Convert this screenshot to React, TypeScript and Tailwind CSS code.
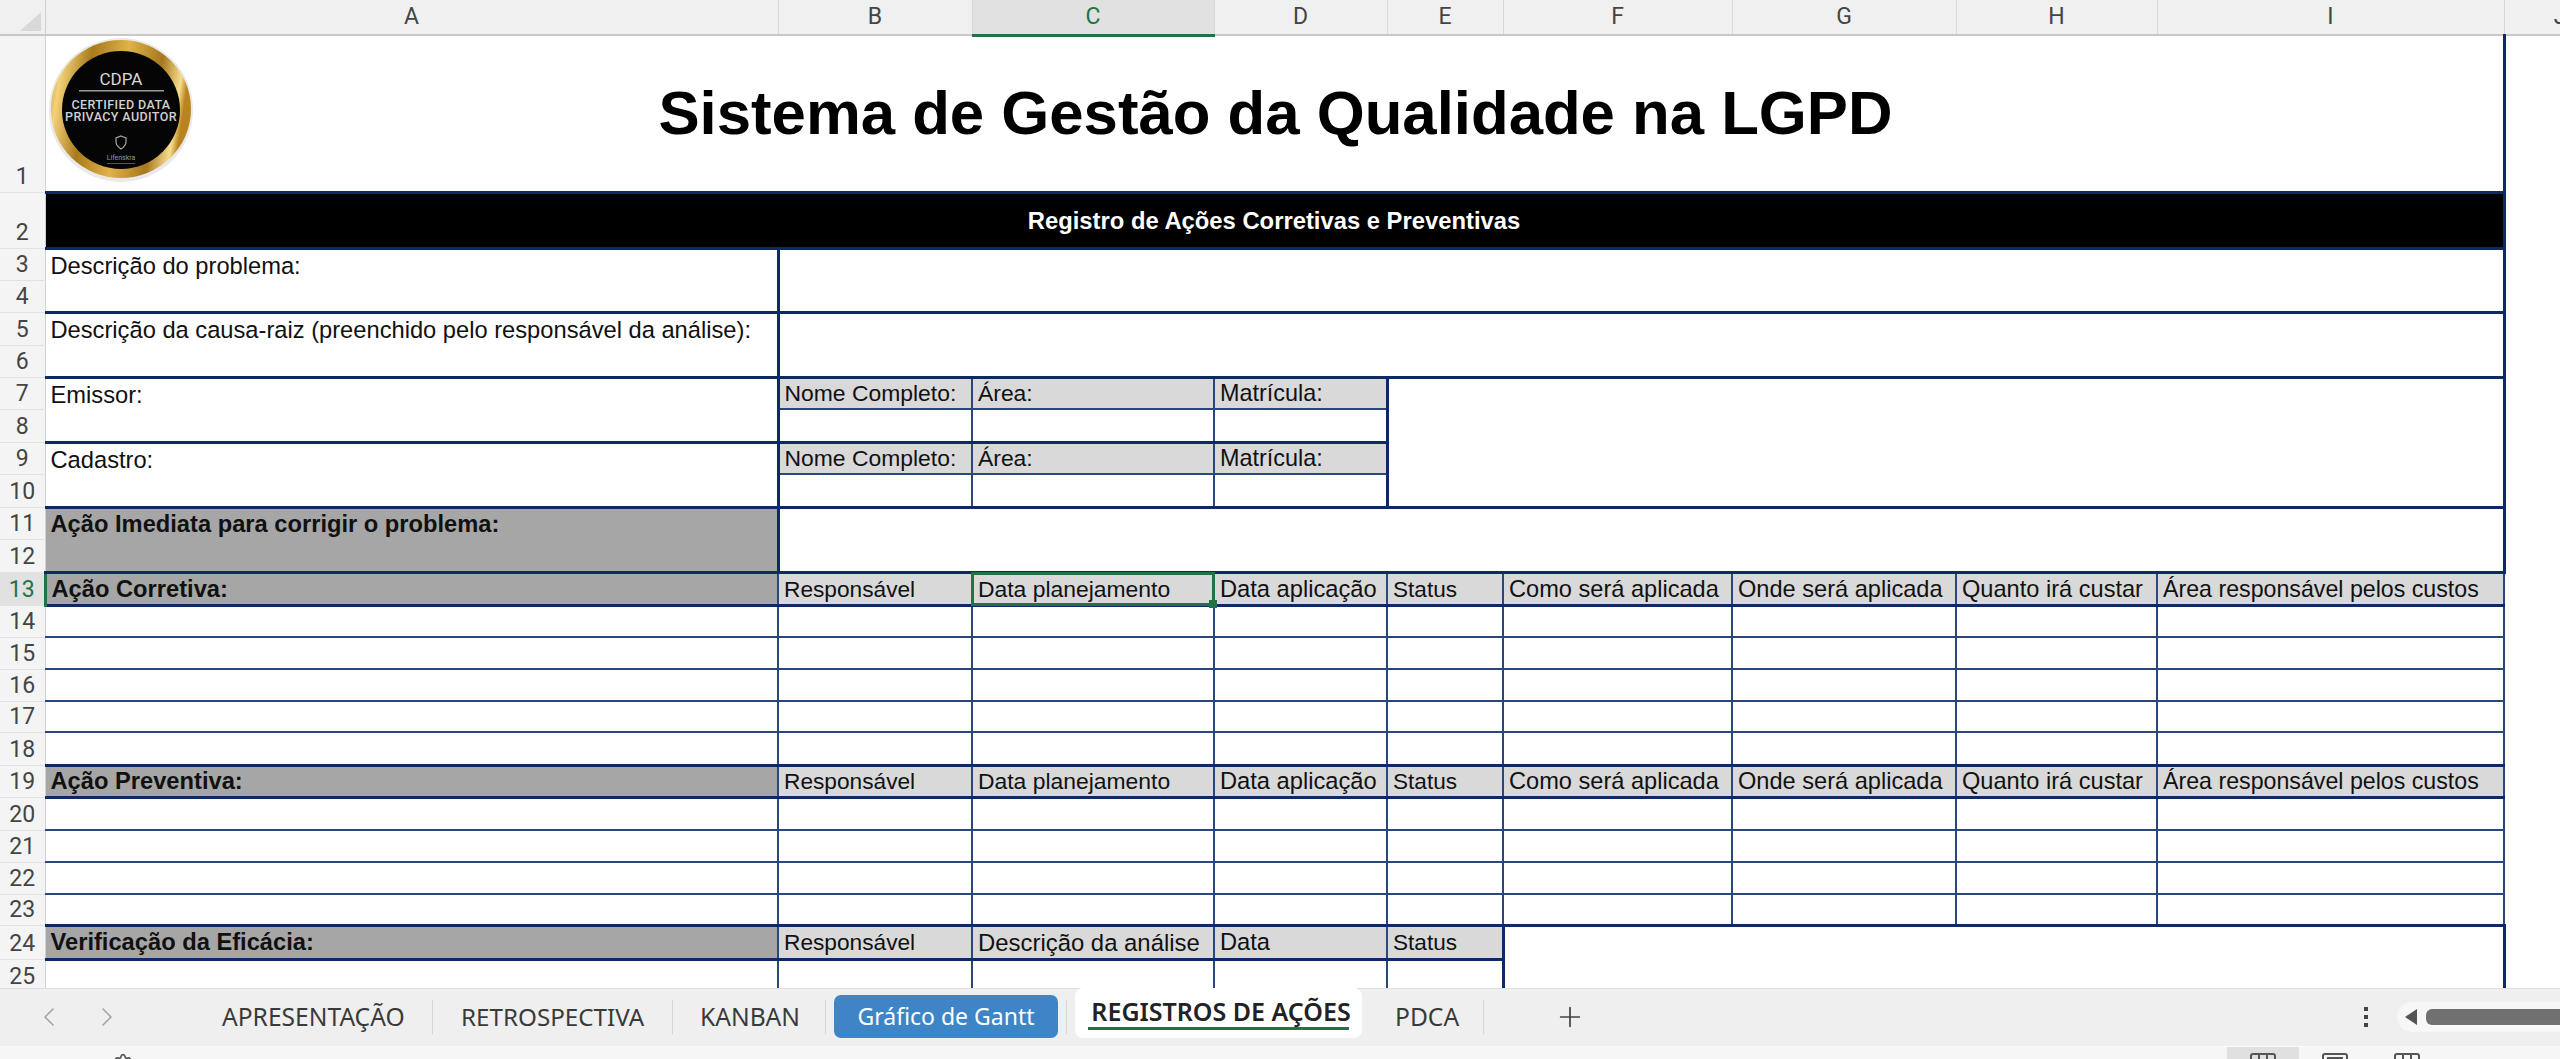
import { ChevronLeft, ChevronRight, Plus, Settings } from 'lucide-react';
import type { ReactNode } from 'react';

const thin = 'border-2 border-[#2a4779]';
const thick = 'border-[3px] border-[#0c2a63]';
const headRow = 'border-x-2 border-y-[3px] border-x-[#2a4779] border-y-[#0c2a63]';
const labelTop = 'border-t-[3px] border-t-[#0c2a63] bg-[#d9d9d9]';
const fieldBottom = 'border-b-[3px] border-b-[#0c2a63]';

const colLabels = ['A', 'B', 'C', 'D', 'E', 'F', 'G', 'H', 'I', 'J'];
const actionHeaders = [
  { t: 'Responsável', size: 'text-[22.7px]' },
  { t: 'Data planejamento', size: 'text-[22.9px]' },
  { t: 'Data aplicação', size: 'text-[23.7px]' },
  { t: 'Status', size: 'text-[22.6px]' },
  { t: 'Como será aplicada', size: 'text-[23.6px]' },
  { t: 'Onde será aplicada', size: 'text-[23.6px]' },
  { t: 'Quanto irá custar', size: 'text-[23.6px]' },
  { t: 'Área responsável pelos custos', size: 'text-[23.2px]' },
];

function Cell({
  children,
  className = '',
  size = 'text-[23.7px]',
  colSpan,
  rowSpan,
}: {
  children?: ReactNode;
  className?: string;
  size?: string;
  colSpan?: number;
  rowSpan?: number;
}) {
  return (
    <td
      colSpan={colSpan}
      rowSpan={rowSpan}
      className={`px-[5px] py-0 whitespace-nowrap overflow-hidden leading-[27px] text-[#111] ${size} ${className}`}
    >
      {children}
    </td>
  );
}

function RowNum({ n, className }: { n: number; className: string }) {
  const active = n === 13;
  return (
    <th
      className={`${className} p-0 align-bottom font-normal text-center text-[23px] leading-[30px] border-b border-[#e2e2e2] font-['Roboto',sans-serif] ${
        active
          ? 'bg-[#e1e1e1] text-[#217346] border-r-[3px] border-r-[#217346]'
          : 'bg-[#f4f4f4] text-[#444] border-r border-r-[#d0d0d0]'
      }`}
    >
      {n}
    </th>
  );
}

function BlankRow({ n, h, cols = 9 }: { n: number; h: string; cols?: number }) {
  return (
    <tr>
      <RowNum n={n} className={h} />
      {Array.from({ length: cols }).map((_, i) => (
        <Cell key={i} className={`${thin} ${i === 0 ? 'border-l-0' : ''}`} />
      ))}
    </tr>
  );
}

function ActionHeader({ n, h, label, selected }: { n: number; h: string; label: string; selected?: boolean }) {
  return (
    <tr>
      <RowNum n={n} className={h} />
      <Cell className={`${headRow} border-l-0 bg-[#a6a6a6] font-bold pt-[1px]`}>{label}</Cell>
      {actionHeaders.map((col, i) => (
        <Cell
          key={col.t}
          size={col.size}
          className={`${headRow} pt-[1px] bg-[#d9d9d9] ${selected && i === 1 ? 'relative overflow-visible' : ''}`}
        >
          {col.t}
          {selected && i === 1 && (
            <span className="absolute -inset-[2px] border-[3px] border-[#217346]">
              <span className="absolute -right-[5px] -bottom-[5px] w-[8px] h-[8px] bg-[#217346]" />
            </span>
          )}
        </Cell>
      ))}
    </tr>
  );
}

function Logo() {
  return (
    <svg className="absolute left-[3px] top-[1px]" width="150" height="150" viewBox="0 0 150 150">
      <defs>
        <linearGradient id="gold" x1="0" y1="0" x2="1" y2="0.15">
          <stop offset="0" stopColor="#c08a20" />
          <stop offset="0.1" stopColor="#f3d27a" />
          <stop offset="0.3" stopColor="#a97a1c" />
          <stop offset="0.55" stopColor="#e0b24a" />
          <stop offset="0.8" stopColor="#a6781e" />
          <stop offset="0.95" stopColor="#f7dd8f" />
          <stop offset="1" stopColor="#b98420" />
        </linearGradient>
      </defs>
      <circle cx="72" cy="72" r="72" fill="#e9e9e9" />
      <ellipse cx="72" cy="71" rx="70" ry="69" fill="url(#gold)" />
      <ellipse cx="72" cy="72" rx="59" ry="59" fill="#050505" />
      <g textAnchor="middle" fontFamily="Roboto, sans-serif">
        <text x="72" y="47" fontSize="17" fill="#d8d8d8">CDPA</text>
        <rect x="30" y="52" width="85" height="1.5" fill="#9a9a9a" />
        <text x="72" y="71" fontSize="12.5" fontWeight="500" letterSpacing="0.4" fill="#d0d0d0">CERTIFIED DATA</text>
        <text x="72" y="83" fontSize="12.5" fontWeight="500" letterSpacing="0.4" fill="#d0d0d0">PRIVACY AUDITOR</text>
        <text x="72" y="122" fontSize="7" fill="#9a9a9a">Lifenskra</text>
      </g>
      <path d="M72 98l5 2v4c0 3-2 5-5 7-3-2-5-4-5-7v-4z" fill="none" stroke="#a8a8a8" strokeWidth="1.2" />
      <rect x="58" y="125" width="28" height="1" fill="#555" />
    </svg>
  );
}

function Divider() {
  return <span className="w-px h-[34px] bg-[#d6d6d6]" />;
}

function ViewIcon({ bar }: { bar?: boolean }) {
  return (
    <svg width="26" height="26" viewBox="0 0 26 26" fill="none" stroke="#555" strokeWidth="2">
      <rect x="1" y="1" width="24" height="24" rx="2" />
      {bar ? <path d="M5 5h16" /> : <path d="M9 1v8M17 1v8" />}
    </svg>
  );
}

export default function App() {
  return (
    <div className="w-[2560px] h-[1059px] flex flex-col overflow-hidden bg-white font-['Liberation_Sans',Arial,sans-serif]">
      {/* Sheet */}
      <div className="h-[988px] overflow-hidden">
        <table className="table-fixed border-collapse w-[2616px]">
          <colgroup>
            <col className="w-[45px]" />
            <col className="w-[733px]" />
            <col className="w-[194px]" />
            <col className="w-[242px]" />
            <col className="w-[173px]" />
            <col className="w-[116px]" />
            <col className="w-[229px]" />
            <col className="w-[224px]" />
            <col className="w-[201px]" />
            <col className="w-[347px]" />
            <col className="w-[112px]" />
          </colgroup>
          <tbody>
            <tr className="h-[35px]">
              <th className="h-[35px] p-0 bg-[#f0f0f0] border-b-2 border-b-[#c8c8c8] border-r border-r-[#d0d0d0] align-top">
                <svg width="45" height="34" viewBox="0 0 45 34" className="block">
                  <path d="M41 12v19H20z" fill="#d8d8d8" />
                </svg>
              </th>
              {colLabels.map((c) => (
                <th
                  key={c}
                  className={`h-[35px] p-0 font-normal text-center text-[23px] leading-[30px] border-b-2 border-r border-r-[#d8d8d8] font-['Roboto',sans-serif] ${
                    c === 'C'
                      ? 'bg-[#e1e1e1] text-[#217346] border-b-[3px] border-b-[#217346]'
                      : 'bg-[#f0f0f0] text-[#444] border-b-[#c8c8c8]'
                  }`}
                >
                  {c}
                </th>
              ))}
            </tr>

            <tr>
              <RowNum n={1} className="h-[157px]" />
              <Cell
                colSpan={9}
                className="relative text-center overflow-visible border-r-[3px] border-r-[#0c2a63] border-b-[3px] border-b-[#0c2a63]"
              >
                <Logo />
                <span className="block -mt-[1px] pl-[3px] text-[61.7px] leading-[70px] font-bold text-black">
                  Sistema de Gestão da Qualidade na LGPD
                </span>
              </Cell>
            </tr>

            <tr>
              <RowNum n={2} className="h-[56px]" />
              <Cell colSpan={9} size="text-[23.8px]" className={`${thick} border-l-0 bg-black text-center font-bold text-white`}>
                Registro de Ações Corretivas e Preventivas
              </Cell>
            </tr>

            <tr>
              <RowNum n={3} className="h-[32px]" />
              <Cell rowSpan={2} className={`${thick} border-l-0 align-top pt-[3px]`}>Descrição do problema:</Cell>
              <Cell colSpan={8} rowSpan={2} className={thick} />
            </tr>
            <tr>
              <RowNum n={4} className="h-[32px]" />
            </tr>

            <tr>
              <RowNum n={5} className="h-[33px]" />
              <Cell rowSpan={2} className={`${thick} border-l-0 align-top pt-[3px]`}>
                Descrição da causa-raiz (preenchido pelo responsável da análise):
              </Cell>
              <Cell colSpan={8} rowSpan={2} className={thick} />
            </tr>
            <tr>
              <RowNum n={6} className="h-[32px]" />
            </tr>

            <tr>
              <RowNum n={7} className="h-[32px]" />
              <Cell rowSpan={2} className={`${thick} border-l-0 align-top pt-[3px]`}>Emissor:</Cell>
              <Cell size="text-[22.9px]" className={`${thin} ${labelTop}`}>Nome Completo:</Cell>
              <Cell size="text-[22.9px]" className={`${thin} ${labelTop}`}>Área:</Cell>
              <Cell size="text-[23.4px]" className={`${thin} ${labelTop}`}>Matrícula:</Cell>
              <Cell colSpan={5} rowSpan={4} className={thick} />
            </tr>
            <tr>
              <RowNum n={8} className="h-[33px]" />
              <Cell className={`${thin} ${fieldBottom}`} />
              <Cell className={`${thin} ${fieldBottom}`} />
              <Cell className={`${thin} ${fieldBottom}`} />
            </tr>
            <tr>
              <RowNum n={9} className="h-[32px]" />
              <Cell rowSpan={2} className={`${thick} border-l-0 align-top pt-[3px]`}>Cadastro:</Cell>
              <Cell size="text-[22.9px]" className={`${thin} ${labelTop}`}>Nome Completo:</Cell>
              <Cell size="text-[22.9px]" className={`${thin} ${labelTop}`}>Área:</Cell>
              <Cell size="text-[23.4px]" className={`${thin} ${labelTop}`}>Matrícula:</Cell>
            </tr>
            <tr>
              <RowNum n={10} className="h-[33px]" />
              <Cell className={`${thin} ${fieldBottom}`} />
              <Cell className={`${thin} ${fieldBottom}`} />
              <Cell className={`${thin} ${fieldBottom}`} />
            </tr>

            <tr>
              <RowNum n={11} className="h-[32px]" />
              <Cell rowSpan={2} className={`${thick} border-l-0 align-top pt-[2px] bg-[#a6a6a6] font-bold`}>
                Ação Imediata para corrigir o problema:
              </Cell>
              <Cell colSpan={8} rowSpan={2} className={thick} />
            </tr>
            <tr>
              <RowNum n={12} className="h-[33px]" />
            </tr>

            <ActionHeader n={13} h="h-[33px]" label="Ação Corretiva:" selected />
            <BlankRow n={14} h="h-[32px]" />
            <BlankRow n={15} h="h-[32px]" />
            <BlankRow n={16} h="h-[32px]" />
            <BlankRow n={17} h="h-[31px]" />
            <BlankRow n={18} h="h-[33px]" />
            <ActionHeader n={19} h="h-[32px]" label="Ação Preventiva:" />
            <BlankRow n={20} h="h-[33px]" />
            <BlankRow n={21} h="h-[32px]" />
            <BlankRow n={22} h="h-[32px]" />
            <BlankRow n={23} h="h-[31px]" />

            <tr>
              <RowNum n={24} className="h-[34px]" />
              <Cell className={`${headRow} border-l-0 bg-[#a6a6a6] font-bold`}>Verificação da Eficácia:</Cell>
              <Cell size="text-[22.7px]" className={`${headRow} bg-[#d9d9d9]`}>Responsável</Cell>
              <Cell size="text-[23.9px]" className={`${headRow} bg-[#d9d9d9]`}>Descrição da análise</Cell>
              <Cell size="text-[23.7px]" className={`${headRow} bg-[#d9d9d9]`}>Data</Cell>
              <Cell size="text-[22.6px]" className={`${headRow} bg-[#d9d9d9]`}>Status</Cell>
              <Cell colSpan={4} rowSpan={2} className={thick} />
            </tr>
            <tr>
              <RowNum n={25} className="h-[33px]" />
              <Cell className={`${thin} border-l-0`} />
              <Cell className={thin} />
              <Cell className={thin} />
              <Cell className={thin} />
              <Cell className={thin} />
            </tr>
          </tbody>
        </table>
      </div>

      {/* Sheet tabs */}
      <div className="h-[58px] flex items-start bg-[#efefef] border-t border-[#e0e0e0] text-[24.6px] text-[#3a3a3a] font-['Noto_Sans',sans-serif]">
        <div className="w-[198px] h-[56px] flex items-center pl-[33px] gap-[26px] text-[#a3a3a3]">
          <ChevronLeft size={32} strokeWidth={1.2} />
          <ChevronRight size={32} strokeWidth={1.2} />
        </div>
        <div className="h-[56px] w-[235px] flex items-center justify-between pl-[24px]">
          <span>APRESENTAÇÃO</span>
          <Divider />
        </div>
        <div className="h-[56px] w-[240px] flex items-center justify-between pl-[28px]">
          <span className="text-[24.2px]">RETROSPECTIVA</span>
          <Divider />
        </div>
        <div className="h-[56px] w-[153px] flex items-center justify-between pl-[27px]">
          <span>KANBAN</span>
          <Divider />
        </div>
        <div className="ml-[8px] mt-[6px] w-[224px] h-[43px] rounded-[7px] bg-[#3d85c6] text-white text-[23px] flex items-center justify-center">
          Gráfico de Gantt
        </div>
        <div className="ml-[8px] h-[56px] flex items-center">
          <Divider />
        </div>
        <div className="ml-[8px] w-[287px] h-[50px] -mt-px rounded-[8px] bg-white flex flex-col items-center pt-[8px] font-semibold text-[25px] text-[#222]">
          <span className="pl-[5px] leading-[30px]">REGISTROS DE AÇÕES</span>
          <span className="w-[261px] h-[3px] mt-[1px] bg-[#217346]" />
        </div>
        <div className="ml-[10px] h-[56px] w-[112px] flex items-center justify-between pl-[23px]">
          <span>PDCA</span>
          <Divider />
        </div>
        <div className="ml-[70px] h-[56px] flex items-center text-[#444]">
          <Plus size={32} strokeWidth={1.3} />
        </div>
        <div className="ml-[778px] h-[56px] flex flex-col items-center justify-center gap-[4px]">
          <span className="w-[4px] h-[4px] bg-[#444]" />
          <span className="w-[4px] h-[4px] bg-[#444]" />
          <span className="w-[4px] h-[4px] bg-[#444]" />
        </div>
        <div className="ml-[29px] mt-[13px] flex-1 h-[30px] rounded-l-[15px] bg-[#f7f7f7] flex items-center pl-[8px] gap-[9px]">
          <span className="w-0 h-0 border-y-[8px] border-y-transparent border-r-[12px] border-r-[#555]" />
          <span className="flex-1 h-[16px] rounded-l-[6px] bg-[#707070]" />
        </div>
      </div>

      {/* Status bar */}
      <div className="flex-1 overflow-hidden bg-[#f6f6f6] flex items-start border-t border-[#fafafa]">
        <Settings size={20} className="ml-[113px] mt-[6px] text-[#555]" />
        <div className="ml-[2094px] w-[72px] h-[13px] bg-[#e0e0e0] flex justify-center pt-[6px]">
          <ViewIcon />
        </div>
        <div className="ml-[23px] pt-[6px]">
          <ViewIcon bar />
        </div>
        <div className="ml-[46px] pt-[6px]">
          <ViewIcon />
        </div>
      </div>
    </div>
  );
}
